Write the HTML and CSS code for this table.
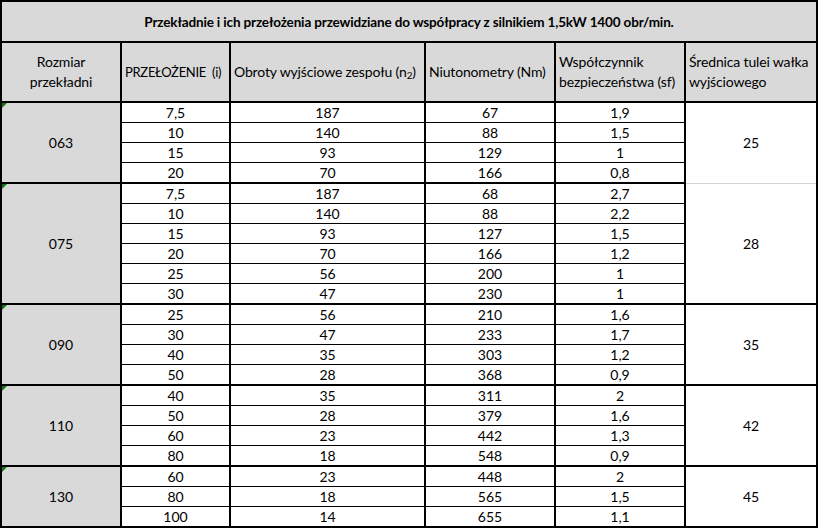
FILE: index.html
```html
<!DOCTYPE html>
<html lang="pl">
<head>
<meta charset="utf-8">
<title>Przekładnie</title>
<link rel="stylesheet" href="styles.css">
</head>
<body>
<table class="sheet">
  <colgroup>
    <col class="c1"><col class="c2"><col class="c3"><col class="c4"><col class="c5"><col class="c6">
  </colgroup>
  <thead>
    <tr class="title-row">
      <th colspan="6" class="title">Przekładnie i ich przełożenia przewidziane do współpracy z silnikiem 1,5kW 1400 obr/min.</th>
    </tr>
    <tr class="head-row">
      <th class="h center">Rozmiar<br>przekładni</th>
      <th class="h nowrap caps">PRZEŁOŻENIE&nbsp; (i)</th>
      <th class="h nowrap">Obroty wyjściowe zespołu (n<sub>2</sub>)</th>
      <th class="h nowrap">Niutonometry (Nm)</th>
      <th class="h">Współczynnik bezpieczeństwa (sf)</th>
      <th class="h">Średnica tulei wałka wyjściowego</th>
    </tr>
  </thead>
  <tbody class="grp g4">
    <tr class="first"><td rowspan="4" class="size">063</td><td>7,5</td><td>187</td><td>67</td><td>1,9</td><td rowspan="4" class="dia soft-bottom">25</td></tr>
    <tr><td>10</td><td>140</td><td>88</td><td>1,5</td></tr>
    <tr><td>15</td><td>93</td><td>129</td><td>1</td></tr>
    <tr class="last"><td>20</td><td>70</td><td>166</td><td>0,8</td></tr>
  </tbody>
  <tbody class="grp g6">
    <tr class="first"><td rowspan="6" class="size">075</td><td>7,5</td><td>187</td><td>68</td><td>2,7</td><td rowspan="6" class="dia soft-top">28</td></tr>
    <tr><td>10</td><td>140</td><td>88</td><td>2,2</td></tr>
    <tr><td>15</td><td>93</td><td>127</td><td>1,5</td></tr>
    <tr><td>20</td><td>70</td><td>166</td><td>1,2</td></tr>
    <tr><td>25</td><td>56</td><td>200</td><td>1</td></tr>
    <tr class="last"><td>30</td><td>47</td><td>230</td><td>1</td></tr>
  </tbody>
  <tbody class="grp g4">
    <tr class="first"><td rowspan="4" class="size">090</td><td>25</td><td>56</td><td>210</td><td>1,6</td><td rowspan="4" class="dia">35</td></tr>
    <tr><td>30</td><td>47</td><td>233</td><td>1,7</td></tr>
    <tr><td>40</td><td>35</td><td>303</td><td>1,2</td></tr>
    <tr class="last"><td>50</td><td>28</td><td>368</td><td>0,9</td></tr>
  </tbody>
  <tbody class="grp g4">
    <tr class="first"><td rowspan="4" class="size">110</td><td>40</td><td>35</td><td>311</td><td>2</td><td rowspan="4" class="dia">42</td></tr>
    <tr><td>50</td><td>28</td><td>379</td><td>1,6</td></tr>
    <tr><td>60</td><td>23</td><td>442</td><td>1,3</td></tr>
    <tr class="last"><td>80</td><td>18</td><td>548</td><td>0,9</td></tr>
  </tbody>
  <tbody class="grp g3">
    <tr class="first"><td rowspan="3" class="size">130</td><td>60</td><td>23</td><td>448</td><td>2</td><td rowspan="3" class="dia">45</td></tr>
    <tr><td>80</td><td>18</td><td>565</td><td>1,5</td></tr>
    <tr class="last"><td>100</td><td>14</td><td>655</td><td>1,1</td></tr>
  </tbody>
</table>
</body>
</html>
```

FILE: styles.css
```css
html, body {
  margin: 0;
  padding: 0;
  background: #ffffff;
}

.sheet {
  border-collapse: collapse;
  table-layout: fixed;
  width: 818px;
  font-family: Lato, "Open Sans", sans-serif;
  font-size: 14px;
  color: #000;
}

.c1 { width: 120px; }
.c2 { width: 109px; }
.c3 { width: 195px; }
.c4 { width: 130px; }
.c5 { width: 130px; }
.c6 { width: 132px; }

.sheet th,
.sheet td {
  border: 2px solid #000;
  padding: 0 3px;
  line-height: 20px;
}

.title-row { height: 41px; }
.title {
  background: #d9d9d9;
  font-weight: bold;
  font-size: 13.5px;
  text-align: center;
  letter-spacing: -0.15px;
}

.head-row { height: 60px; }
.h {
  background: #d9d9d9;
  font-weight: normal;
  text-align: left;
  vertical-align: middle;
  white-space: normal;
  padding: 0 0 0 2px;
  letter-spacing: -0.15px;
}
.h.nowrap {
  white-space: nowrap;
  overflow: visible;
}
.h.caps {
  font-size: 13px;
  letter-spacing: -0.3px;
}
.h.center { text-align: center; padding: 0; }
.h sub {
  font-size: 10px;
  line-height: 0;
  vertical-align: -2px;
}

.grp td {
  text-align: center;
  border-top-width: 1px;
  border-bottom-width: 1px;
  padding: 0 3px;
  height: 19px;
  line-height: 19px;
}
.grp tr { height: 20px; }
.grp tr.first td { border-top-width: 2px; }
.grp tr.last td { border-bottom-width: 2px; }

.grp td.size {
  position: relative;
  background: #d9d9d9;
  border-top-width: 2px;
  border-bottom-width: 2px;
}
.grp td.size::before {
  content: "";
  position: absolute;
  left: 0;
  top: 0;
  border-style: solid;
  border-width: 5px 5px 0 0;
  border-color: #0b7a0b transparent transparent transparent;
}

.grp td.dia {
  border-top-width: 2px;
  border-bottom-width: 2px;
}
.grp td.dia.soft-bottom {
  border-bottom: 1px solid #d4d4d4;
}
.grp td.dia.soft-top {
  border-top: 1px solid #d4d4d4;
}
```
